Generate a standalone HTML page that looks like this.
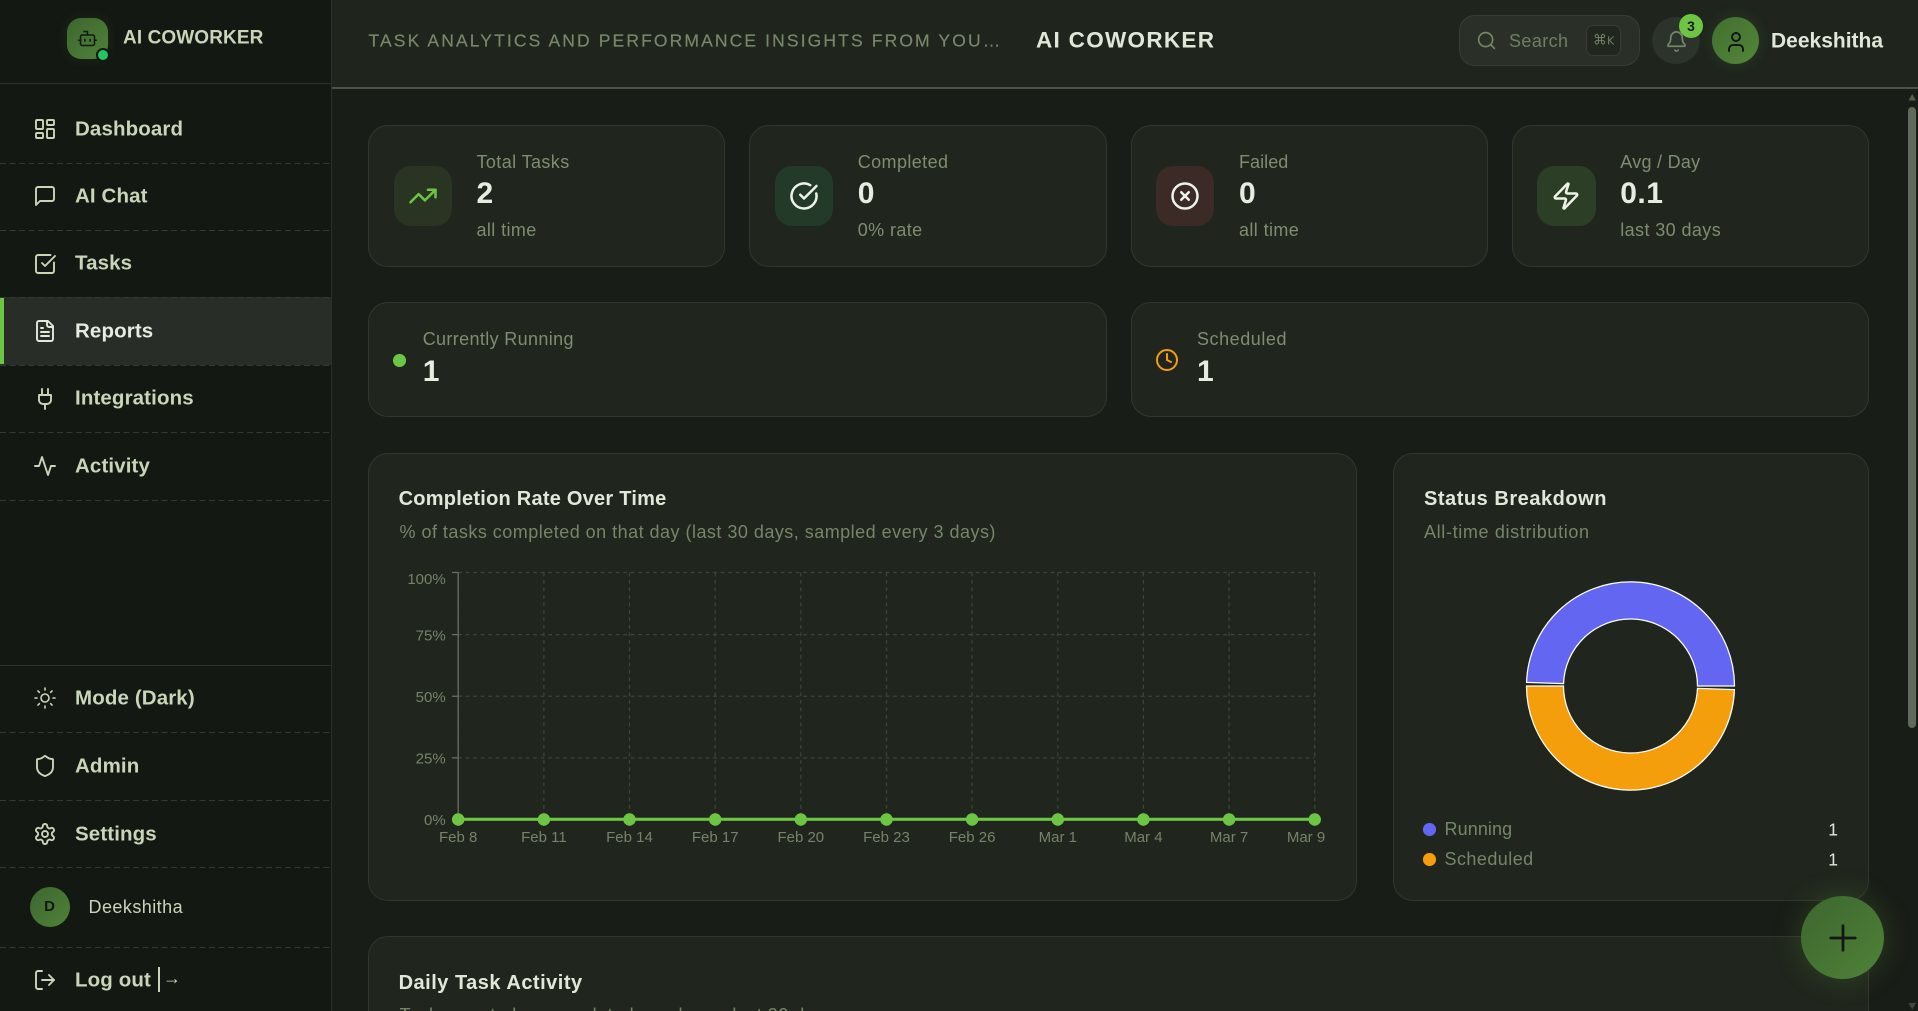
<!DOCTYPE html>
<html lang="en"><head><meta charset="utf-8"><title>Reports - AI Coworker</title>
<style>
*{box-sizing:border-box;margin:0;padding:0}
html,body{width:1918px;height:1011px;overflow:hidden;background:#191d17;font-family:"Liberation Sans",Arial,sans-serif}
#app{position:absolute;left:0;top:0;width:1918px;height:1011px;overflow:hidden;background:#191d17}
.t{position:absolute;white-space:nowrap;transform:translateY(-50%);line-height:1.2}
.i{position:absolute;fill:none;stroke:currentColor;stroke-width:2;stroke-linecap:round;stroke-linejoin:round}
aside{position:absolute;left:0;top:0;width:332px;height:1011px;background:#141813;border-right:1px solid #2b3028}
header{position:absolute;left:332px;top:0;width:1586px;height:89px;background:#1f251d;border-bottom:2.5px solid #4d5249}
.logo{position:absolute;left:67px;top:18px;width:41px;height:41px;border-radius:14px;background:linear-gradient(135deg,#3d6630,#4f8237);box-shadow:0 0 12px rgba(90,140,50,.15);color:#141813}
.ldot{position:absolute;left:96px;top:48px;width:14px;height:14px;border-radius:50%;background:#22c55e;border:2px solid #141813}
.nav{font-weight:700;font-size:20.5px;letter-spacing:.12px;color:#c8d5b9;left:75px}
.nic{color:#c8d5b9;stroke-width:1.9}
.d{position:absolute;left:0;width:331px;height:1.25px;background:repeating-linear-gradient(90deg,#343a30 0 6px,transparent 6px 9.5px)}
.sl{position:absolute;left:0;width:331px;height:1.25px;background:#2d3229}
.act{position:absolute;left:0;top:297px;width:331px;height:68px;background:#282d27}
.bar{position:absolute;left:0;top:298px;width:3.5px;height:66px;background:#6cc644}
.card{position:absolute;background:#20261d;border:1.25px solid #31372d;border-radius:20px}
.ib{position:absolute;top:166px;width:58.5px;height:60px;border-radius:17px}
.lab{font-size:18px;letter-spacing:.4px;color:#7e8d72}
.val{font-size:30px;font-weight:700;color:#e6ede0}
.h{font-size:20px;font-weight:700;color:#e0e9d9}
.sub{font-size:18px;color:#75856a}
</style></head>
<body>
<div id="app">
<main>
<div class="card" style="left:368px;top:125px;width:357px;height:142px"></div>
<div class="card" style="left:749px;top:125px;width:357.5px;height:142px"></div>
<div class="card" style="left:1130.5px;top:125px;width:357px;height:142px"></div>
<div class="card" style="left:1512px;top:125px;width:356.5px;height:142px"></div>

<div class="ib" style="left:393.5px;background:#2a3423"></div>
<svg class="i" style="left:408px;top:181px;color:#6cc644" width="30" height="30" viewBox="0 0 24 24"><path d="M22 7l-8.5 8.5-5-5L2 17"/><path d="M16 7h6v6"/></svg>
<div class="t lab" style="left:476.5px;top:162.5px">Total Tasks</div>
<div class="t val" style="left:476.5px;top:194px">2</div>
<div class="t lab" style="left:476.5px;top:230.5px">all time</div>

<div class="ib" style="left:774.5px;background:#233a28"></div>
<svg class="i" style="left:789px;top:181px;color:#eef3ea" width="30" height="30" viewBox="0 0 24 24"><path d="M21.801 10A10 10 0 1 1 17 3.335"/><path d="m9 11 3 3L22 4"/></svg>
<div class="t lab" style="left:857.75px;top:162.5px">Completed</div>
<div class="t val" style="left:857.75px;top:194px">0</div>
<div class="t lab" style="left:857.75px;top:230.5px">0% rate</div>

<div class="ib" style="left:1155.5px;background:#3b2a25"></div>
<svg class="i" style="left:1170px;top:181px;color:#eef3ea" width="30" height="30" viewBox="0 0 24 24"><circle cx="12" cy="12" r="10"/><path d="m15 9-6 6"/><path d="m9 9 6 6"/></svg>
<div class="t lab" style="left:1239px;top:162.5px;letter-spacing:.05px">Failed</div>
<div class="t val" style="left:1239px;top:194px">0</div>
<div class="t lab" style="left:1239px;top:230.5px">all time</div>

<div class="ib" style="left:1537px;background:#2c3e25"></div>
<svg class="i" style="left:1551px;top:181px;color:#eef3ea" width="30" height="30" viewBox="0 0 24 24"><path d="M4 14a1 1 0 0 1-.78-1.63l9.9-10.2a.5.5 0 0 1 .86.46l-1.92 6.02A1 1 0 0 0 13 10h7a1 1 0 0 1 .78 1.63l-9.9 10.2a.5.5 0 0 1-.86-.46l1.92-6.02A1 1 0 0 0 11 14z"/></svg>
<div class="t lab" style="left:1620.25px;top:162.5px;letter-spacing:.27px">Avg / Day</div>
<div class="t val" style="left:1620.25px;top:194px;letter-spacing:.5px">0.1</div>
<div class="t lab" style="left:1620.25px;top:230.5px">last 30 days</div>

<div class="card" style="left:368px;top:302px;width:738.5px;height:115px"></div>
<div style="position:absolute;left:393px;top:354px;width:12.5px;height:12.5px;border-radius:50%;background:#6cc644"></div>
<div class="t lab" style="left:422.7px;top:339.5px;letter-spacing:.36px">Currently Running</div>
<div class="t val" style="left:422.7px;top:372px">1</div>

<div class="card" style="left:1130.5px;top:302px;width:738px;height:115px"></div>
<svg class="i" style="left:1155px;top:348px;color:#f59e0b" width="24" height="24" viewBox="0 0 24 24"><circle cx="12" cy="12" r="10"/><path d="M12 6v6l4 2"/></svg>
<div class="t lab" style="left:1197px;top:339.5px;letter-spacing:.55px">Scheduled</div>
<div class="t val" style="left:1197px;top:372px">1</div>

<div class="card" style="left:368px;top:453px;width:988.5px;height:448px"></div>
<div class="t h" style="left:398.6px;top:499.3px;letter-spacing:.24px">Completion Rate Over Time</div>
<div class="t sub" style="left:399.5px;top:532.5px;letter-spacing:.48px">% of tasks completed on that day (last 30 days, sampled every 3 days)</div>

<svg style="position:absolute;left:0;top:0" width="1918" height="1011" viewBox="0 0 1918 1011">
<g stroke="#3e4439" stroke-width="1.25" stroke-dasharray="3.75 3.75" fill="none">
<path d="M458.2 572.5H1314.7M458.2 634.6H1314.7M458.2 696.3H1314.7M458.2 757.9H1314.7"/>
<path d="M458.2 572.5V819.5M543.9 572.5V819.5M629.5 572.5V819.5M715.2 572.5V819.5M800.8 572.5V819.5M886.5 572.5V819.5M972.1 572.5V819.5M1057.8 572.5V819.5M1143.4 572.5V819.5M1229.1 572.5V819.5M1314.7 572.5V819.5"/>
</g>
<g stroke="#6b6f68" stroke-width="1.25" fill="none">
<path d="M458.2 572.5V820.1H1314.7"/>
<path d="M452 572.5h6.2M452 634.6h6.2M452 696.3h6.2M452 757.9h6.2M452 819.5h6.2"/>
<path d="M458.2 819.5v6.3M543.9 819.5v6.3M629.5 819.5v6.3M715.2 819.5v6.3M800.8 819.5v6.3M886.5 819.5v6.3M972.1 819.5v6.3M1057.8 819.5v6.3M1143.4 819.5v6.3M1229.1 819.5v6.3M1314.7 819.5v6.3"/>
</g>
<path d="M458.2 819.3H1314.7" stroke="#6cc644" stroke-width="3" fill="none"/>
<g fill="#6cc644">
<circle cx="458.2" cy="819.5" r="6.25"/><circle cx="543.9" cy="819.5" r="6.25"/><circle cx="629.5" cy="819.5" r="6.25"/><circle cx="715.2" cy="819.5" r="6.25"/><circle cx="800.8" cy="819.5" r="6.25"/><circle cx="886.5" cy="819.5" r="6.25"/><circle cx="972.1" cy="819.5" r="6.25"/><circle cx="1057.8" cy="819.5" r="6.25"/><circle cx="1143.4" cy="819.5" r="6.25"/><circle cx="1229.1" cy="819.5" r="6.25"/><circle cx="1314.7" cy="819.5" r="6.25"/>
</g>
<g font-family="'Liberation Sans',Arial,sans-serif" font-size="15" fill="#74836a" text-anchor="end">
<text x="445.7" y="584">100%</text><text x="445.7" y="640.6">75%</text><text x="445.7" y="701.8">50%</text><text x="445.7" y="763.4">25%</text><text x="445.7" y="825">0%</text>
</g>
<g font-family="'Liberation Sans',Arial,sans-serif" font-size="15" fill="#74836a" text-anchor="middle">
<text x="458.2" y="842.2">Feb 8</text><text x="543.9" y="842.2">Feb 11</text><text x="629.5" y="842.2">Feb 14</text><text x="715.2" y="842.2">Feb 17</text><text x="800.8" y="842.2">Feb 20</text><text x="886.5" y="842.2">Feb 23</text><text x="972.1" y="842.2">Feb 26</text><text x="1057.8" y="842.2">Mar 1</text><text x="1143.4" y="842.2">Mar 4</text><text x="1229.1" y="842.2">Mar 7</text><text x="1306" y="842.2">Mar 9</text>
</g>
</svg>

<div class="card" style="left:1393px;top:453px;width:475.5px;height:448px"></div>
<div class="t h" style="left:1424px;top:499.3px;letter-spacing:.53px">Status Breakdown</div>
<div class="t sub" style="left:1424px;top:532.5px;letter-spacing:.65px">All-time distribution</div>
<svg style="position:absolute;left:1510px;top:566px" width="241" height="241" viewBox="-120.5 -120 241 241">
<path d="M104 0A104 104 0 0 0-103.94-3.63L-66.96-2.34A67 67 0 0 1 67 0Z" fill="#6366f1" stroke="#fff" stroke-width="1.25"/>
<path d="M-104 0A104 104 0 0 0 103.94 3.63L66.96 2.34A67 67 0 0 1-67 0Z" fill="#f59e0b" stroke="#fff" stroke-width="1.25"/>
</svg>
<div style="position:absolute;left:1423px;top:823px;width:12.5px;height:12.5px;border-radius:50%;background:#6366f1"></div>
<div class="t sub" style="left:1444.5px;top:830px;letter-spacing:.1px">Running</div>
<div class="t" style="right:80px;top:830px;font-size:17.5px;color:#e0e9d9">1</div>
<div style="position:absolute;left:1423px;top:853px;width:12.5px;height:12.5px;border-radius:50%;background:#f59e0b"></div>
<div class="t sub" style="left:1444.5px;top:860px;letter-spacing:.45px">Scheduled</div>
<div class="t" style="right:80px;top:860px;font-size:17.5px;color:#e0e9d9">1</div>

<div class="card" style="left:368px;top:936px;width:1500.5px;height:75px;border-bottom:0;border-radius:20px 20px 0 0"></div>
<div class="t h" style="left:398.6px;top:983px;letter-spacing:.5px">Daily Task Activity</div>
<div style="position:absolute;left:399.5px;top:1000px;width:600px;height:11px;overflow:hidden"><div class="t sub" style="left:0;top:15.5px;letter-spacing:.48px">Tasks created vs completed per day — last 30 days</div></div>

<svg style="position:absolute;left:1908px;top:89px" width="10" height="922" viewBox="0 0 10 922">
<path d="M4.2 5L8 11.5H.5Z" fill="#535e4f"/>
<rect x="0" y="18" width="8" height="621" rx="4" fill="#5f6a5b"/>
<path d="M.5 914H8L4.2 920.5Z" fill="#3f4a3c"/>
</svg>

<button style="position:absolute;left:1801px;top:896px;width:83px;height:83px;border:0;border-radius:50%;background:linear-gradient(135deg,#3d6630,#4f8237);box-shadow:0 0 28px rgba(95,150,60,.28)" aria-label="Add"></button>
<svg class="i" style="left:1821.5px;top:916.5px;color:#141813;stroke-width:1.6" width="42" height="42" viewBox="0 0 24 24"><path d="M5 12h14"/><path d="M12 5v14"/></svg>
</main>

<header></header>
<div class="t" style="left:368.5px;top:40.5px;font-size:17.5px;letter-spacing:2.12px;color:#77876b;-webkit-text-stroke:.2px #77876b">TASK ANALYTICS AND PERFORMANCE INSIGHTS FROM YOU…</div>
<div class="t" style="left:1036px;top:40px;font-size:22.5px;font-weight:700;letter-spacing:1.3px;color:#e0e7d9">AI COWORKER</div>

<div style="position:absolute;left:1458.5px;top:15px;width:181px;height:51px;border-radius:16px;background:#2a3027;border:1.25px solid #373d33"></div>
<svg class="i" style="left:1475.5px;top:30px;color:#75856a;stroke-width:1.9" width="21" height="21" viewBox="0 0 24 24"><path d="m21 21-4.34-4.34"/><circle cx="11" cy="11" r="8"/></svg>
<div class="t" style="left:1509px;top:41.5px;font-size:18px;letter-spacing:.4px;color:#6f7e64">Search</div>
<div style="position:absolute;left:1586px;top:25px;width:35px;height:31px;border-radius:7px;background:#21271e;border:1.25px solid #373d33"></div>
<div class="t" style="left:1593px;top:41px;font-family:'DejaVu Sans',sans-serif;font-size:14px;color:#6f7e64">⌘<span style="font-size:11px">K</span></div>

<div style="position:absolute;left:1652px;top:17px;width:48px;height:47px;border-radius:50%;background:#2c332a"></div>
<svg class="i" style="left:1664.5px;top:29.5px;color:#75856a;stroke-width:1.8" width="23" height="23" viewBox="0 0 24 24"><path d="M10.268 21a2 2 0 0 0 3.464 0"/><path d="M3.262 15.326A1 1 0 0 0 4 17h16a1 1 0 0 0 .74-1.673C19.41 13.956 18 12.499 18 8A6 6 0 0 0 6 8c0 4.499-1.411 5.956-2.738 7.326"/></svg>
<div style="position:absolute;left:1679px;top:14px;width:24px;height:24px;border-radius:50%;background:#6cc644;color:#141813;font-size:14px;font-weight:700;line-height:24px;text-align:center">3</div>

<div style="position:absolute;left:1712px;top:17px;width:47px;height:47px;border-radius:50%;background:linear-gradient(135deg,#42702f,#528539);box-shadow:0 0 14px rgba(95,150,60,.18)"></div>
<svg class="i" style="left:1723.5px;top:29.5px;color:#141813" width="24" height="24" viewBox="0 0 24 24"><path d="M19 21v-2a4 4 0 0 0-4-4H9a4 4 0 0 0-4 4v2"/><circle cx="12" cy="7" r="4"/></svg>
<div class="t" style="left:1771px;top:41px;font-size:21px;font-weight:700;color:#e0e7d9">Deekshitha</div>

<aside>
<div class="logo"></div>
<svg class="i" style="left:77.3px;top:27.5px;color:#141813;stroke-width:1.8" width="21" height="21" viewBox="0 0 24 24"><path d="M12 8V4H8"/><rect width="16" height="12" x="4" y="8" rx="2"/><path d="M2 14h2"/><path d="M20 14h2"/><path d="M15 13v2"/><path d="M9 13v2"/></svg>
<div class="ldot"></div>
<div class="t" style="left:123px;top:38.5px;font-size:19px;font-weight:700;letter-spacing:.1px;color:#c8d5b9">AI COWORKER</div>
<div class="sl" style="top:83px"></div>

<div class="act"></div><div class="bar"></div>
<div class="d" style="top:163px"></div><div class="d" style="top:230px"></div><div class="d" style="top:297px"></div><div class="d" style="top:364.5px"></div><div class="d" style="top:432px"></div><div class="d" style="top:499.5px"></div>

<svg class="i nic" style="left:33px;top:116.5px" width="24" height="24" viewBox="0 0 24 24"><rect width="7" height="9" x="3" y="3" rx="1"/><rect width="7" height="5" x="14" y="3" rx="1"/><rect width="7" height="9" x="14" y="12" rx="1"/><rect width="7" height="5" x="3" y="16" rx="1"/></svg>
<div class="t nav" style="top:129.5px">Dashboard</div>
<svg class="i nic" style="left:33px;top:184px" width="24" height="24" viewBox="0 0 24 24"><path d="M21 15a2 2 0 0 1-2 2H7l-4 4V5a2 2 0 0 1 2-2h14a2 2 0 0 1 2 2z"/></svg>
<div class="t nav" style="top:196.5px">AI Chat</div>
<svg class="i nic" style="left:33px;top:251.5px" width="24" height="24" viewBox="0 0 24 24"><path d="M21 10.5V19a2 2 0 0 1-2 2H5a2 2 0 0 1-2-2V5a2 2 0 0 1 2-2h12.5"/><path d="m9 11 3 3L22 4"/></svg>
<div class="t nav" style="top:264px">Tasks</div>
<svg class="i" style="left:33px;top:319px;color:#e3eadc;stroke-width:1.9" width="24" height="24" viewBox="0 0 24 24"><path d="M15 2H6a2 2 0 0 0-2 2v16a2 2 0 0 0 2 2h12a2 2 0 0 0 2-2V7Z"/><path d="M14 2v4a2 2 0 0 0 2 2h4"/><path d="M10 9H8"/><path d="M16 13H8"/><path d="M16 17H8"/></svg>
<div class="t nav" style="top:331.5px;color:#e6ede0">Reports</div>
<svg class="i nic" style="left:33px;top:386.5px" width="24" height="24" viewBox="0 0 24 24"><path d="M12 22v-5"/><path d="M9 8V2"/><path d="M15 8V2"/><path d="M18 8v5a4 4 0 0 1-4 4h-4a4 4 0 0 1-4-4V8Z"/></svg>
<div class="t nav" style="top:399px">Integrations</div>
<svg class="i nic" style="left:33px;top:454px" width="24" height="24" viewBox="0 0 24 24"><path d="M22 12h-4l-3 9L9 3l-3 9H2"/></svg>
<div class="t nav" style="top:466.5px">Activity</div>

<div class="sl" style="top:665px"></div>
<svg class="i nic" style="left:33px;top:686px;stroke-width:1.6" width="24" height="24" viewBox="0 0 24 24"><circle cx="12" cy="12" r="4"/><path d="M12 2v2"/><path d="M12 20v2"/><path d="m4.93 4.93 1.41 1.41"/><path d="m17.66 17.66 1.41 1.41"/><path d="M2 12h2"/><path d="M20 12h2"/><path d="m6.34 17.66-1.41 1.41"/><path d="m19.07 4.93-1.41 1.41"/></svg>
<div class="t nav" style="top:699px">Mode (Dark)</div>
<div class="d" style="top:731.5px"></div>
<svg class="i nic" style="left:33px;top:754px" width="24" height="24" viewBox="0 0 24 24"><path d="M20 13c0 5-3.5 7.5-7.66 8.95a1 1 0 0 1-.67-.01C7.5 20.5 4 18 4 13V6a1 1 0 0 1 1-1c2 0 4.5-1.2 6.24-2.72a1.17 1.17 0 0 1 1.52 0C14.51 3.81 17 5 19 5a1 1 0 0 1 1 1z"/></svg>
<div class="t nav" style="top:766.5px">Admin</div>
<div class="d" style="top:799.5px"></div>
<svg class="i nic" style="left:33px;top:822px" width="24" height="24" viewBox="0 0 24 24"><path d="M12.22 2h-.44a2 2 0 0 0-2 2v.18a2 2 0 0 1-1 1.73l-.43.25a2 2 0 0 1-2 0l-.15-.08a2 2 0 0 0-2.73.73l-.22.38a2 2 0 0 0 .73 2.73l.15.1a2 2 0 0 1 1 1.72v.51a2 2 0 0 1-1 1.74l-.15.09a2 2 0 0 0-.73 2.73l.22.38a2 2 0 0 0 2.73.73l.15-.08a2 2 0 0 1 2 0l.43.25a2 2 0 0 1 1 1.73V20a2 2 0 0 0 2 2h.44a2 2 0 0 0 2-2v-.18a2 2 0 0 1 1-1.73l.43-.25a2 2 0 0 1 2 0l.15.08a2 2 0 0 0 2.73-.73l.22-.39a2 2 0 0 0-.73-2.73l-.15-.08a2 2 0 0 1-1-1.74v-.5a2 2 0 0 1 1-1.74l.15-.09a2 2 0 0 0 .73-2.73l-.22-.38a2 2 0 0 0-2.73-.73l-.15.08a2 2 0 0 1-2 0l-.43-.25a2 2 0 0 1-1-1.73V4a2 2 0 0 0-2-2z"/><circle cx="12" cy="12" r="3"/></svg>
<div class="t nav" style="top:835px">Settings</div>
<div class="d" style="top:866.5px"></div>
<div style="position:absolute;left:29.5px;top:887px;width:40px;height:40px;border-radius:50%;background:linear-gradient(135deg,#3d6630,#4f8237);color:#141813;font-size:15px;font-weight:700;line-height:40px;text-align:center">D</div>
<div class="t" style="left:88.5px;top:907.5px;font-size:18px;letter-spacing:.45px;color:#c8d5b9">Deekshitha</div>
<div class="d" style="top:946.5px"></div>
<svg class="i nic" style="left:33px;top:968px" width="24" height="24" viewBox="0 0 24 24"><path d="M9 21H5a2 2 0 0 1-2-2V5a2 2 0 0 1 2-2h4"/><path d="m16 17 5-5-5-5"/><path d="M21 12H9"/></svg>
<div class="t nav" style="top:981px">Log out</div>
<div style="position:absolute;left:158px;top:967px;width:2px;height:25px;background:#c8d5b9"></div>
<div class="t" style="left:163px;top:979px;font-size:18px;color:#c8d5b9">→</div>
</aside>
</div>
</body></html>
